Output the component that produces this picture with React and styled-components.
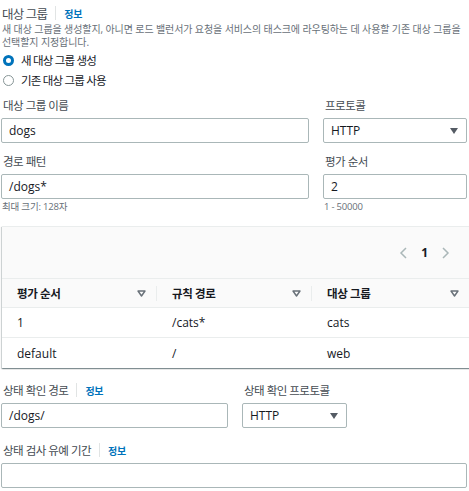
import React from "react";
import styled, { createGlobalStyle } from "styled-components";

const GlobalStyle = createGlobalStyle`
  body {
    margin: 0;
    background: #ffffff;
    font-family: "Open Sans", "Noto Sans CJK KR", sans-serif;
    color: #16191f;
  }
`;

const Page = styled.div`
  width: 466px;
  padding: 4px 0 0 1px;
`;

const TitleRow = styled.div`
  display: flex;
  align-items: center;
  gap: 8px;
  height: 18px;
  padding-left: 1px;
`;

const Title = styled.span`
  font-size: 12.5px;
  letter-spacing: -0.8px;
  color: #444b52;
`;

const Divider = styled.span`
  width: 1px;
  height: 14px;
  background: #e1e4e4;
`;

const InfoLink = styled.a`
  font-size: 10px;
  font-weight: 700;
  letter-spacing: -0.3px;
  color: #0073bb;
`;

const Description = styled.p`
  margin: 1px 0 0 1px;
  font-size: 10px;
  line-height: 13px;
  letter-spacing: -0.1px;
  color: #687078;
`;

const RadioGroup = styled.div`
  display: flex;
  flex-direction: column;
  gap: 4px;
  margin-top: 3px;
`;

const RadioRow = styled.label`
  display: flex;
  align-items: center;
  gap: 7px;
  height: 16px;
  font-size: 11.5px;
  letter-spacing: -0.8px;
  color: #16191f;
`;

const RadioDot = styled.span`
  box-sizing: border-box;
  width: 11px;
  height: 11px;
  margin-left: 2px;
  border-radius: 50%;
  border: ${(p) => (p.$checked ? "3.5px solid #0073bb" : "1px solid #879596")};
  background: #fff;
`;

const FieldGrid = styled.div`
  display: grid;
  grid-template-columns: ${(p) => p.$cols || "308px 1fr"};
  column-gap: 14px;
  margin-top: ${(p) => p.$top || "10px"};
`;

const Field = styled.div`
  display: flex;
  flex-direction: column;
`;

const Label = styled.div`
  display: flex;
  align-items: center;
  gap: 8px;
  height: 16px;
  font-size: 11.5px;
  letter-spacing: -0.5px;
  color: #444b52;
  margin-bottom: 5px;
  padding-left: 2px;
`;

const Input = styled.div`
  box-sizing: border-box;
  height: 25px;
  border: 1px solid #aab7b8;
  border-radius: 2px;
  padding: 0 7px;
  display: flex;
  align-items: center;
  font-size: 12px;
  color: #16191f;
`;

const Select = styled(Input)`
  justify-content: space-between;
  padding-right: 8px;
`;

const Caret = styled.span`
  width: 0;
  height: 0;
  border-left: 4px solid transparent;
  border-right: 4px solid transparent;
  border-top: 6px solid #545b64;
`;

const Hint = styled.div`
  font-size: 9.5px;
  letter-spacing: -0.2px;
  color: #687078;
  margin-top: 1px;
  padding-left: 1px;
  height: 13px;
  line-height: 13px;
`;

const Panel = styled.div`
  margin: 13px -3px 0 1px;
  background: #fafafa;
  border-top: 1px solid #eaeded;
  box-shadow: 0 1px 1px 0 rgba(0, 28, 36, 0.3), 1px 1px 1px 0 rgba(0, 28, 36, 0.15),
    -1px 1px 1px 0 rgba(0, 28, 36, 0.15);
`;

const Pager = styled.div`
  display: flex;
  justify-content: flex-end;
  align-items: center;
  gap: 14px;
  height: 51px;
  padding-right: 20px;
  font-size: 12px;
  font-weight: 700;
  color: #16191f;
`;

const Table = styled.div`
  display: grid;
  grid-template-columns: 155px 155px 1fr;
`;

const HeadCell = styled.div`
  position: relative;
  box-sizing: border-box;
  display: flex;
  align-items: center;
  justify-content: space-between;
  height: 30px;
  padding: 0 11px 0 15px;
  border-top: 1px solid #eaeded;
  border-bottom: 1px solid #eaeded;
  font-size: 11.5px;
  letter-spacing: -0.4px;
  font-weight: 700;
  color: #16191f;
  &:not(:last-child)::after {
    content: "";
    position: absolute;
    right: 0;
    top: 7px;
    bottom: 6px;
    width: 1px;
    background: #eaeded;
  }
`;

const Cell = styled.div`
  box-sizing: border-box;
  display: flex;
  align-items: center;
  height: 30px;
  padding-left: 15px;
  background: #fff;
  font-size: 12px;
  color: #16191f;
  border-bottom: ${(p) => (p.$last ? "none" : "1px solid #eaeded")};
`;

const Chevron = ({ dir }) => (
  <svg width="8" height="12" viewBox="0 0 8 12">
    <path
      d={dir === "left" ? "M7 1 L2 6 L7 11" : "M1 1 L6 6 L1 11"}
      fill="none"
      stroke="#aab7b8"
      strokeWidth="1.5"
    />
  </svg>
);

const SortIcon = () => (
  <svg width="9" height="7" viewBox="0 0 9 7">
    <path d="M1 1 H8 L4.5 6 Z" fill="none" stroke="#687078" strokeWidth="1.4" strokeLinejoin="round" />
  </svg>
);

const rows = [
  ["1", "/cats*", "cats"],
  ["default", "/", "web"],
];

export default function App() {
  return (
    <Page>
      <GlobalStyle />
      <TitleRow>
        <Title>대상 그룹</Title>
        <Divider />
        <InfoLink>정보</InfoLink>
      </TitleRow>
      <Description>
        새 대상 그룹을 생성할지, 아니면 로드 밸런서가 요청을 서비스의 태스크에 라우팅하는 데 사용할 기존 대상 그룹을
        선택할지 지정합니다.
      </Description>
      <RadioGroup>
        <RadioRow>
          <RadioDot $checked />새 대상 그룹 생성
        </RadioRow>
        <RadioRow>
          <RadioDot />기존 대상 그룹 사용
        </RadioRow>
      </RadioGroup>

      <FieldGrid $top="9px">
        <Field>
          <Label>대상 그룹 이름</Label>
          <Input>dogs</Input>
        </Field>
        <Field>
          <Label>프로토콜</Label>
          <Select>
            HTTP
            <Caret />
          </Select>
        </Field>
      </FieldGrid>

      <FieldGrid $top="10px">
        <Field>
          <Label>경로 패턴</Label>
          <Input>/dogs*</Input>
          <Hint>최대 크기: 128자</Hint>
        </Field>
        <Field>
          <Label>평가 순서</Label>
          <Input>2</Input>
          <Hint>1 - 50000</Hint>
        </Field>
      </FieldGrid>

      <Panel>
        <Pager>
          <Chevron dir="left" />
          <span>1</span>
          <Chevron dir="right" />
        </Pager>
        <Table>
          <HeadCell>
            평가 순서 <SortIcon />
          </HeadCell>
          <HeadCell>
            규칙 경로 <SortIcon />
          </HeadCell>
          <HeadCell>
            대상 그룹 <SortIcon />
          </HeadCell>
          {rows.map((r, i) =>
            r.map((c, j) => (
              <Cell key={`${i}-${j}`} $last={i === rows.length - 1}>
                {c}
              </Cell>
            ))
          )}
        </Table>
      </Panel>

      <FieldGrid $cols="227px 105px" $top="14px">
        <Field>
          <Label>
            상태 확인 경로
            <Divider />
            <InfoLink>정보</InfoLink>
          </Label>
          <Input>/dogs/</Input>
        </Field>
        <Field>
          <Label>상태 확인 프로토콜</Label>
          <Select>
            HTTP
            <Caret />
          </Select>
        </Field>
      </FieldGrid>

      <FieldGrid $cols="1fr" $top="14px">
        <Field>
          <Label>
            상태 검사 유예 기간
            <Divider />
            <InfoLink>정보</InfoLink>
          </Label>
          <Input />
        </Field>
      </FieldGrid>
    </Page>
  );
}
